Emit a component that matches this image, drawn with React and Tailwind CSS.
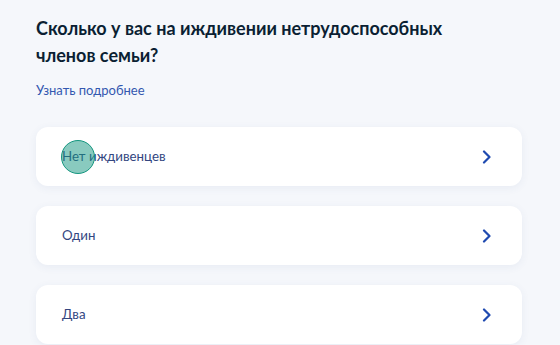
import React from "react";

function Chevron() {
  return (
    <svg width="10" height="14" viewBox="0 0 10 14" fill="none">
      <path d="M2 1.5L7.5 7L2 12.5" stroke="#1f4ab0" strokeWidth="2.2" strokeLinecap="round" strokeLinejoin="round" />
    </svg>
  );
}

function Option({ label, children }) {
  return (
    <div className="relative flex h-[59px] items-center justify-between rounded-[12px] bg-white pl-[26px] pr-[30px] shadow-[0_2px_8px_rgba(60,80,140,0.07)]">
      <span className="text-[13.3px] text-[#33467f]">{label}</span>
      <Chevron />
      {children}
    </div>
  );
}

export default function App() {
  return (
    <div className="h-[345px] w-[560px] overflow-hidden bg-[#f5f7fb] font-['Lato','Noto_Sans',sans-serif]">
      <div className="px-[36px] pr-[38px] pt-[15px]">
        <h1 className="text-[18px] font-bold leading-[27px] text-[#0b1f33]">
          Сколько у вас на иждивении нетрудоспособных
          <br />
          членов семьи?
        </h1>
        <div className="mt-[12px] text-[13px] leading-[18px] text-[#3458b0]">Узнать подробнее</div>
        <div className="mt-[28px] flex w-[486px] flex-col gap-[20px]">
          <Option label="Нет иждивенцев">
            <div className="absolute left-[25px] top-[13px] h-[34px] w-[34px] rounded-full border-[1.5px] border-[#14967f] bg-[rgba(20,150,127,0.5)]" />
          </Option>
          <Option label="Один" />
          <Option label="Два" />
        </div>
      </div>
    </div>
  );
}
